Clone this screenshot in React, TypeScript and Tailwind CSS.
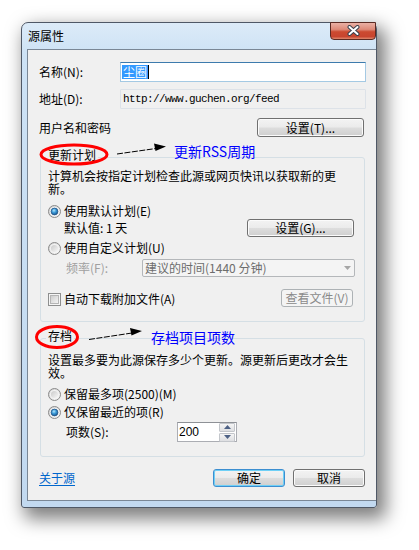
import clsx from "clsx";
import type { ReactNode } from "react";

function Btn({
  children,
  w,
  focus,
  disabled,
}: {
  children: ReactNode;
  w: string;
  focus?: boolean;
  disabled?: boolean;
}) {
  return (
    <div
      className={clsx(
        "flex h-[18px] items-center justify-center rounded-[3px] border text-[12px] leading-[16px]",
        w,
        disabled
          ? "border-[#adb2b5] bg-[#f4f4f4] text-[#8a8a8a]"
          : "bg-[linear-gradient(#f3f3f3_0%,#ebebeb_48%,#dddddd_52%,#cfcfcf_100%)] text-black",
        !disabled && !focus && "border-[#707070] shadow-[inset_0_0_0_1px_#fbfbfb]",
        focus && "border-[#3c8ed0] shadow-[inset_0_0_0_1px_#6fd0f6]"
      )}
    >
      {children}
    </div>
  );
}

function Radio({ checked }: { checked?: boolean }) {
  return (
    <svg width="13" height="13" viewBox="0 0 13 13" className="shrink-0">
      <defs>
        <linearGradient id="rOuter" x1="0" y1="0" x2="1" y2="1">
          <stop offset="0" stopColor="#d0d0d0" />
          <stop offset="1" stopColor="#fbfbfb" />
        </linearGradient>
        <linearGradient id="rInner" x1="0" y1="0" x2="1" y2="1">
          <stop offset="0" stopColor="#c9c9c9" />
          <stop offset="1" stopColor="#f7f7f7" />
        </linearGradient>
        <radialGradient id="rDot" cx="0.42" cy="0.35" r="0.7">
          <stop offset="0" stopColor="#b4e6fb" />
          <stop offset="0.45" stopColor="#3a9ad8" />
          <stop offset="1" stopColor="#174f86" />
        </radialGradient>
      </defs>
      <circle cx="6.5" cy="6.5" r="6" fill="url(#rOuter)" stroke="#8b8b8b" />
      <circle cx="6.5" cy="6.5" r="4.5" fill="#f4f4f4" />
      {checked ? (
        <circle cx="6.5" cy="6.5" r="3.4" fill="url(#rDot)" stroke="#24578a" strokeWidth="0.8" />
      ) : (
        <circle cx="6.5" cy="6.5" r="3.6" fill="url(#rInner)" />
      )}
    </svg>
  );
}

function Check() {
  return (
    <svg width="13" height="13" viewBox="0 0 13 13" className="shrink-0">
      <defs>
        <linearGradient id="cInner" x1="0" y1="0" x2="1" y2="1">
          <stop offset="0" stopColor="#cbcbcb" />
          <stop offset="1" stopColor="#f6f6f6" />
        </linearGradient>
      </defs>
      <rect x="0.5" y="0.5" width="12" height="12" fill="#f5f5f5" stroke="#8e8f8f" />
      <rect x="2.5" y="2.5" width="8" height="8" fill="url(#cInner)" stroke="#b5b5b5" />
    </svg>
  );
}

function SpinBtn({ up }: { up?: boolean }) {
  return (
    <div className="flex h-[9px] w-[16px] items-center justify-center rounded-[1px] border border-[#c3c6cb] bg-[linear-gradient(#f5f5f5,#dedfe2)]">
      <svg width="7" height="4" viewBox="0 0 7 4">
        <path d={up ? "M0 4 L3.5 0 L7 4 Z" : "M0 0 L3.5 4 L7 0 Z"} fill="#4d6185" />
      </svg>
    </div>
  );
}

export default function App() {
  return (
    <div className="relative h-[550px] w-[419px] overflow-hidden bg-white pl-[21px] pt-[22px] font-['Noto_Sans_CJK_SC',sans-serif] text-[12px] leading-[16px] text-black">
      {/* window */}
      <div className="w-[356px] rounded-t-[7px] rounded-b-[3px] border border-[#4f5866] bg-[linear-gradient(180deg,#dcebf8_0%,#cde2f5_30px,#c2d9f0_100%)] shadow-[6px_8px_18px_3px_rgba(0,0,0,0.5)]">
        <div className="flex h-[26px] items-center justify-between pl-[6px]">
          <span className="text-[12px]">源属性</span>
          <div className="-mt-px flex h-[18px] w-[46px] items-center justify-center self-start rounded-b-[4px] border border-[#5b2a22] bg-[linear-gradient(#eab0a4_0%,#de8a78_40%,#cc4a30_55%,#c8452f_85%,#e08a6e_100%)]">
            <svg width="13" height="11" viewBox="0 0 13 11" className="-mt-[2px]">
              <path d="M2.5 2 L10.5 9 M10.5 2 L2.5 9" stroke="#39404c" strokeWidth="4" strokeLinecap="round" />
              <path d="M2.5 2 L10.5 9 M10.5 2 L2.5 9" stroke="#ffffff" strokeWidth="2" strokeLinecap="round" />
            </svg>
          </div>
        </div>

        {/* client */}
        <div className="ml-[5px] border-b border-l border-t border-[#7a8796] bg-[#f0f0f0] pb-[13px] pl-[11px] pr-[10px] pt-[12px]">
          <div className="flex h-[20px] items-center">
            <span className="w-[81px]">名称(N):</span>
            <div className="flex h-[20px] flex-1 items-center border border-[#a4c9e3] border-t-[#3d7bad] bg-white pl-px">
              <span className="bg-[#3399ff] px-px leading-[14px] text-white">尘圈</span>
              <span className="h-[14px] w-px bg-black" />
            </div>
          </div>
          <div className="mt-[7px] flex h-[20px] items-center">
            <span className="w-[81px]">地址(D):</span>
            <div className="flex h-[20px] flex-1 items-center rounded-[1px] border border-[#dde2e8] bg-[#f0f0f0] pl-[2px] font-['Liberation_Mono',monospace] text-[11px] tracking-[-0.6px]">
              http://www.guchen.org/feed
            </div>
          </div>
          <div className="mt-[9px] flex h-[19px] items-center justify-between">
            <span>用户名和密码</span>
            <div className="mr-[2px]">
              <Btn w="w-[107px] h-[19px]">设置(T)...</Btn>
            </div>
          </div>

          <fieldset className="mx-px mt-[12px] rounded-[3px] border border-[#d5dfe5] pb-[14px] pl-[7px] pr-[10px]">
            <legend className="relative -top-[2px] -ml-[2px] px-[2px] leading-[16px]">更新计划</legend>
            <div className="mt-[4px] whitespace-nowrap leading-[13px]">
              计算机会按指定计划检查此源或网页快讯以获取新的更
              <br />
              新。
            </div>
            <div className="mt-[8px] flex h-[16px] items-center gap-[3px]">
              <Radio checked />
              <span>使用默认计划(E)</span>
            </div>
            <div className="flex h-[18px] items-center justify-between">
              <span className="ml-[16px]">默认值: 1 天</span>
              <Btn w="w-[107px]">设置(G)...</Btn>
            </div>
            <div className="mt-[3px] flex h-[16px] items-center gap-[3px]">
              <Radio />
              <span>使用自定义计划(U)</span>
            </div>
            <div className="mt-[3px] flex h-[18px] items-center">
              <span className="ml-[18px] w-[76px] text-[#a0a0a0]">频率(F):</span>
              <div className="-mr-px flex h-[18px] flex-1 items-center justify-between rounded-[2px] border border-[#b4b7ba] bg-[#f4f4f4] pl-[2px] pr-[3px] text-[#6d6d6d]">
                <span>建议的时间(1440 分钟)</span>
                <svg width="7" height="4" viewBox="0 0 7 4">
                  <path d="M0 0 L3.5 4 L7 0 Z" fill="#a6a6a6" />
                </svg>
              </div>
            </div>
            <div className="mt-[12px] flex h-[18px] items-center justify-between">
              <div className="mt-[2px] flex items-center gap-[3px]">
                <Check />
                <span>自动下载附加文件(A)</span>
              </div>
              <div className="mr-px">
                <Btn w="w-[72px]" disabled>
                  查看文件(V)
                </Btn>
              </div>
            </div>
          </fieldset>

          <fieldset className="mx-px mt-[8px] rounded-[3px] border border-[#d5dfe5] pb-[14px] pl-[7px] pr-[10px]">
            <legend className="relative -top-[2px] -ml-[2px] px-[2px] leading-[16px]">存档</legend>
            <div className="mt-[7px] whitespace-nowrap leading-[13px]">
              设置最多要为此源保存多少个更新。源更新后更改才会生
              <br />
              效。
            </div>
            <div className="mt-[7px] flex h-[16px] items-center gap-[3px]">
              <Radio />
              <span>保留最多项(2500)(M)</span>
            </div>
            <div className="mt-[2px] flex h-[16px] items-center gap-[3px]">
              <Radio checked />
              <span>仅保留最近的项(R)</span>
            </div>
            <div className="mt-[2px] flex h-[20px] items-center">
              <span className="ml-[18px] w-[111px]">项数(S):</span>
              <div className="flex h-[20px] w-[60px] items-center justify-between border border-[#abadb3] border-t-[#8e9196] bg-white pl-px pr-px">
                <span className="font-['Liberation_Sans',sans-serif] text-[12px]">200</span>
                <div className="flex flex-col gap-px">
                  <SpinBtn up />
                  <SpinBtn />
                </div>
              </div>
            </div>
          </fieldset>

          <div className="mt-[12px] flex h-[18px] items-center">
            <a href="#" className="text-[#0066cc] underline underline-offset-2">
              关于源
            </a>
            <div className="ml-auto mr-px flex gap-[8px]">
              <Btn w="w-[72px]" focus>
                确定
              </Btn>
              <Btn w="w-[72px]">取消</Btn>
            </div>
          </div>
        </div>
        <div className="h-[6px]" />
      </div>

      {/* annotations drawn over the screenshot */}
      <svg className="pointer-events-none absolute left-0 top-0" width="419" height="550" viewBox="0 0 419 550">
        <ellipse cx="74" cy="154.5" rx="33" ry="9.5" fill="none" stroke="#ff0000" strokeWidth="3" />
        <path d="M117 154 L156 148.5" stroke="#000" strokeWidth="1" strokeDasharray="6 1.5" />
        <path d="M166 146.5 L154 143.5 L155.5 151 Z" fill="#000" />
        <ellipse cx="57" cy="337" rx="20.5" ry="10.5" fill="none" stroke="#ff0000" strokeWidth="3" />
        <path d="M89 339.5 L132 333" stroke="#000" strokeWidth="1" strokeDasharray="6 1.5" />
        <path d="M142 331 L130 328 L131.5 335.5 Z" fill="#000" />
      </svg>
      <span className="absolute left-[174px] top-[143px] text-[14px] leading-[16px] text-[#0000ff]">更新RSS周期</span>
      <span className="absolute left-[151px] top-[329px] text-[14px] leading-[16px] text-[#0000ff]">存档项目项数</span>
    </div>
  );
}
